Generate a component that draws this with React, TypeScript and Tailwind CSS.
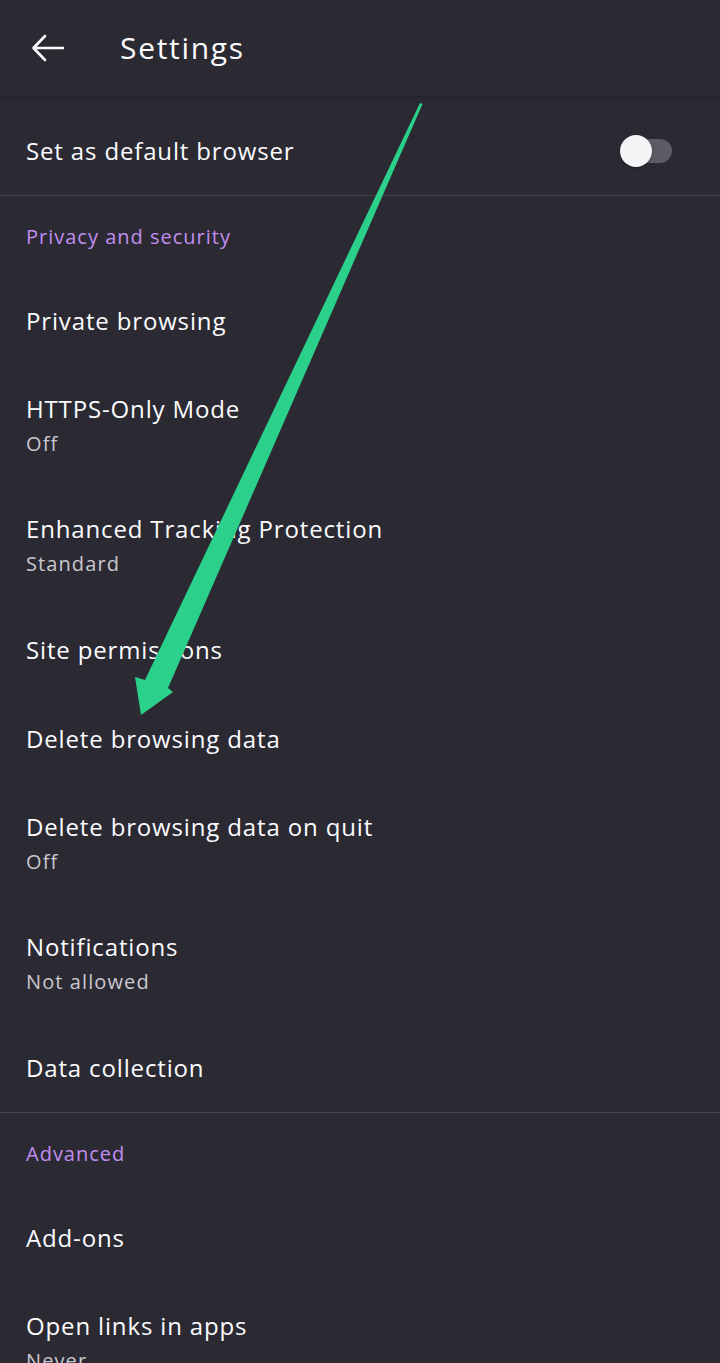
import React from "react";

type Row = {
  title: string;
  sub?: string;
};

const privacyRows: Row[] = [
  { title: "Private browsing" },
  { title: "HTTPS-Only Mode", sub: "Off" },
  { title: "Enhanced Tracking Protection", sub: "Standard" },
  { title: "Site permissions" },
  { title: "Delete browsing data" },
  { title: "Delete browsing data on quit", sub: "Off" },
  { title: "Notifications", sub: "Not allowed" },
  { title: "Data collection" },
];

const advancedRows: Row[] = [
  { title: "Add-ons" },
  { title: "Open links in apps", sub: "Never" },
];

function SettingRow({ row }: { row: Row }) {
  if (!row.sub) {
    return (
      <div className="h-[89px] flex items-center px-[26px]">
        <span className="text-[24px] leading-[30px] tracking-[0.85px] text-[#fbfbfe]">{row.title}</span>
      </div>
    );
  }
  return (
    <div className="h-[120px] flex flex-col pt-[29px] px-[26px]">
      <span className="text-[24px] leading-[30px] tracking-[0.85px] text-[#fbfbfe]">{row.title}</span>
      <span className="mt-[5px] text-[20px] leading-[30px] tracking-[1.1px] text-[#c9c8cf]">{row.sub}</span>
    </div>
  );
}

function SectionHeader({ label }: { label: string }) {
  return (
    <div className="h-[80px] flex items-center px-[26px] pt-[1px]">
      <span className="text-[20px] tracking-[1px] text-[#c08ef0]">{label}</span>
    </div>
  );
}

export default function App() {
  return (
    <div
      className="relative w-[720px] h-[1363px] overflow-hidden bg-[#2b2a33]"
      style={{ fontFamily: '"Open Sans", "Liberation Sans", sans-serif' }}
    >
      {/* top bar */}
      <div className="h-[96px] flex items-center bg-[#2b2a33] shadow-[0_2px_4px_rgba(0,0,0,0.18)] relative z-10">
        <svg width="34" height="30" viewBox="0 0 34 30" className="ml-[31px]" fill="none">
          <path
            d="M32 15H3M14 3L2.5 15L14 27"
            stroke="#fbfbfe"
            strokeWidth="2.6"
            strokeLinecap="round"
            strokeLinejoin="round"
          />
        </svg>
        <span className="ml-[55px] text-[30px] tracking-[1.7px] text-[#fbfbfe] leading-none">Settings</span>
      </div>

      <div className="pt-[10px]">
        <div className="h-[89px] flex items-center justify-between px-[26px]">
          <span className="text-[24px] leading-[30px] tracking-[0.85px] text-[#fbfbfe]">Set as default browser</span>
          <div className="relative w-[52px] h-[24px] mr-[22px] flex items-center">
            <div className="absolute right-0 w-[44px] h-[24px] rounded-full bg-[#5d5c65]" />
            <div className="absolute left-0 w-[32px] h-[32px] rounded-full bg-[#f4f4f7] shadow-[0_1px_3px_rgba(0,0,0,0.4)]" />
          </div>
        </div>
        <div className="h-px bg-[#45444c]" />

        <SectionHeader label="Privacy and security" />
        {privacyRows.map((r) => (
          <SettingRow key={r.title} row={r} />
        ))}
        <div className="h-px bg-[#45444c]" />

        <SectionHeader label="Advanced" />
        {advancedRows.map((r) => (
          <SettingRow key={r.title} row={r} />
        ))}
      </div>

      {/* annotation arrow */}
      <svg className="absolute inset-0 pointer-events-none" width="720" height="1363" viewBox="0 0 720 1363">
        <polygon
          points="420,103 422.5,104 168,688 173,692 141,715 135,677 145,680"
          fill="#2bd08b"
        />
      </svg>
    </div>
  );
}
